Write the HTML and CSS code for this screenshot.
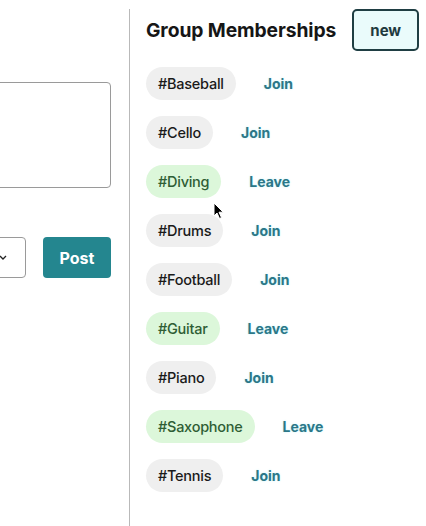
FILE: index.html
```html
<!DOCTYPE html>
<html lang="en">
<head>
<meta charset="utf-8">
<title>Group Memberships</title>
<link rel="stylesheet" href="styles.css">
</head>
<body>
<div class="page">
  <section class="composer">
    <form class="composer-form">
      <textarea class="composer-text" aria-label="Message"></textarea>
      <div class="composer-actions">
        <div class="select" aria-label="Audience">
          <svg class="chev" width="8" height="5" viewBox="0 0 8 5"><path d="M1 1l3 3 3-3" fill="none" stroke="#222" stroke-width="1.3"/></svg>
        </div>
        <button type="button" class="post-btn">Post</button>
      </div>
    </form>
  </section>
  <aside class="groups">
    <div class="groups-head">
      <h2 class="groups-title">Group Memberships</h2>
      <button type="button" class="new-btn">new</button>
    </div>
    <ul class="group-list">
      <li class="group-row"><span class="tag">#Baseball</span><a class="action">Join</a></li>
      <li class="group-row"><span class="tag">#Cello</span><a class="action">Join</a></li>
      <li class="group-row"><span class="tag tag-member">#Diving</span><a class="action">Leave</a></li>
      <li class="group-row"><span class="tag">#Drums</span><a class="action">Join</a></li>
      <li class="group-row"><span class="tag">#Football</span><a class="action">Join</a></li>
      <li class="group-row"><span class="tag tag-member">#Guitar</span><a class="action">Leave</a></li>
      <li class="group-row"><span class="tag">#Piano</span><a class="action">Join</a></li>
      <li class="group-row"><span class="tag tag-member">#Saxophone</span><a class="action">Leave</a></li>
      <li class="group-row"><span class="tag">#Tennis</span><a class="action">Join</a></li>
    </ul>
  </aside>
</div>
<svg class="cursor" width="12" height="18" viewBox="0 0 12 18">
  <path d="M1 1 L1 14 L4 11 L6.5 16.5 L8.5 15.6 L6 10.2 L10.2 10.2 Z" fill="#000" stroke="#fff" stroke-width="1" stroke-linejoin="round"/>
</svg>
</body>
</html>
```
FILE: styles.css
```css
html, body {
  margin: 0;
  padding: 0;
  background: #fff;
}
body {
  font-family: Inter, "Noto Sans", "Liberation Sans", sans-serif;
  color: #1b1b1b;
  width: 426px;
  height: 526px;
  overflow: hidden;
  position: relative;
}
.page {
  display: flex;
  height: 526px;
}
.composer {
  width: 129px;
  flex: none;
  display: flex;
  justify-content: flex-end;
  overflow: hidden;
  box-sizing: border-box;
  padding: 82px 18px 0 0;
}
.composer-form {
  width: 300px;
  flex: none;
  display: flex;
  flex-direction: column;
  gap: 49px;
}
.composer-text {
  display: block;
  box-sizing: border-box;
  width: 100%;
  height: 106px;
  margin: 0;
  border: 1px solid #9a9a9a;
  border-radius: 4px;
  resize: none;
  background: #fff;
}
.composer-actions {
  display: flex;
  justify-content: flex-end;
  gap: 17px;
}
.select {
  box-sizing: border-box;
  width: 120px;
  height: 41px;
  border: 1px solid #9a9a9a;
  border-radius: 4px;
  display: flex;
  align-items: center;
  justify-content: flex-end;
  padding-right: 18px;
}
.chev { display: block; }
.post-btn {
  box-sizing: border-box;
  width: 68px;
  height: 41px;
  border: none;
  border-radius: 4px;
  background: #24868f;
  color: #fff;
  font-family: inherit;
  font-weight: 700;
  font-size: 16px;
  padding: 0;
}
.groups {
  flex: 1;
  margin-top: 9px;
  border-left: 1px solid #b9b9b9;
  padding-left: 16px;
  box-sizing: border-box;
}
.groups-head {
  display: flex;
  align-items: center;
  gap: 16px;
  height: 42px;
}
.groups-title {
  margin: 0;
  font-size: 19.3px;
  font-weight: 700;
  color: #161616;
  letter-spacing: -0.1px;
}
.new-btn {
  box-sizing: border-box;
  width: 67px;
  height: 42px;
  border: 2px solid #1f3e43;
  border-radius: 5px;
  background: #eafbfb;
  color: #1f3a3f;
  font-family: inherit;
  font-weight: 700;
  font-size: 15px;
  padding: 0;
}
.group-list {
  list-style: none;
  margin: 16px 0 0;
  padding: 0;
  display: flex;
  flex-direction: column;
  gap: 16px;
}
.group-row {
  display: flex;
  align-items: center;
  gap: 28px;
}
.tag {
  box-sizing: border-box;
  height: 33px;
  display: inline-flex;
  align-items: center;
  padding: 0 12px;
  border-radius: 17px;
  background: #efefef;
  color: #1a1a1a;
  font-size: 14.5px;
  font-weight: 500;
  letter-spacing: -0.25px;
}
.tag-member {
  background: #dcf7da;
  color: #2f5e35;
}
.action {
  color: #2c7788;
  font-size: 14px;
  font-weight: 700;
  text-shadow: 0 0 2px rgba(120, 230, 240, 0.45);
  cursor: pointer;
}
.cursor {
  position: absolute;
  left: 213px;
  top: 202px;
}
```
